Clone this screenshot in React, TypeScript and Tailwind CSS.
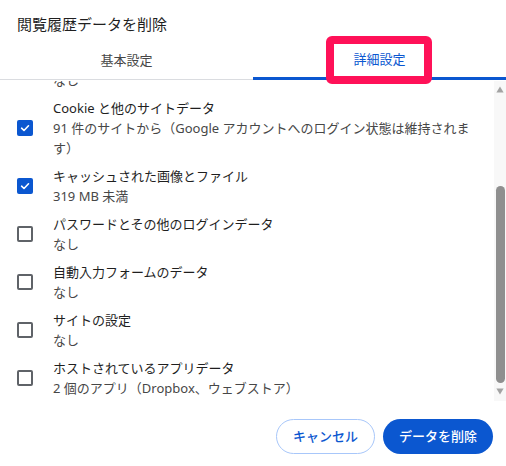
import React from "react";

const items = [
  {
    title: "Cookie と他のサイトデータ",
    sub: ["91 件のサイトから（Google アカウントへのログイン状態は維持されま", "す）"],
    checked: true,
  },
  { title: "キャッシュされた画像とファイル", sub: ["319 MB 未満"], checked: true },
  { title: "パスワードとその他のログインデータ", sub: ["なし"], checked: false },
  { title: "自動入力フォームのデータ", sub: ["なし"], checked: false },
  { title: "サイトの設定", sub: ["なし"], checked: false },
  { title: "ホストされているアプリデータ", sub: ["2 個のアプリ（Dropbox、ウェブストア）"], checked: false },
];

function Checkbox({ checked }: { checked: boolean }) {
  if (checked) {
    return (
      <div className="w-[16px] h-[16px] rounded-[2px] bg-[#0b57d0] flex items-center justify-center shrink-0">
        <svg width="12" height="12" viewBox="0 0 12 12">
          <path d="M2.6 6.2 L5 8.5 L9.5 3.8" fill="none" stroke="#ffffff" strokeWidth="1.6" strokeLinecap="round" strokeLinejoin="round" />
        </svg>
      </div>
    );
  }
  return <div className="w-[16px] h-[16px] rounded-[2px] border-2 border-[#5f6368] shrink-0" />;
}

export default function App() {
  return (
    <div
      className="relative w-[506px] h-[466px] bg-white overflow-hidden flex flex-col"
      style={{ fontFamily: '"Noto Sans", "Noto Sans CJK JP", sans-serif' }}
    >
      <div className="pt-[13px] pb-[7px] pl-[17px] text-[15px] leading-[22px] text-[#1f1f1f]">閲覧履歴データを削除</div>
      <div className="flex h-[38px]">
        <div className="flex-1 flex items-center justify-center border-b border-[#dadce0] text-[13px] text-[#474747]">基本設定</div>
        <div className="flex-1 flex items-center justify-center border-b-[3px] border-[#0b57d0] text-[13px] text-[#0b57d0]">詳細設定</div>
      </div>
      <div className="flex h-[320px] mt-[1px]">
        <div className="flex-1 overflow-hidden">
          <div className="-mt-[11px] pb-[4px] pl-[53px] text-[13px] leading-[20px] text-[#474747]">なし</div>
          {items.map((it, i) => (
            <div key={i} className="flex items-center py-[4px]">
              <div className="w-[53px] pl-[17px] flex items-center">
                <Checkbox checked={it.checked} />
              </div>
              <div className="flex flex-col">
                <div className="text-[13px] leading-[20px] text-[#1f1f1f] whitespace-nowrap">{it.title}</div>
                {it.sub.map((s, j) => (
                  <div key={j} className="text-[13px] leading-[20px] text-[#474747] whitespace-nowrap">{s}</div>
                ))}
              </div>
            </div>
          ))}
        </div>
        <div className="w-[12px] bg-[#f8f8f8] flex flex-col items-center">
          <div className="h-[15px] w-full flex items-center justify-center pt-[2px]">
            <svg width="8" height="7" viewBox="0 0 8 7">
              <path d="M4 0.5 L7.6 6.5 L0.4 6.5 Z" fill="#a3a3a3" />
            </svg>
          </div>
          <div className="flex-1 w-full flex flex-col items-center">
            <div className="mt-[90px] h-[197px] w-[9px] ml-[1px] rounded-full bg-[#8f8f8f]" />
          </div>
          <div className="h-[15px] w-full flex items-center justify-center pb-[4px]">
            <svg width="8" height="7" viewBox="0 0 8 7">
              <path d="M0.4 0.5 L7.6 0.5 L4 6.5 Z" fill="#a3a3a3" />
            </svg>
          </div>
        </div>
      </div>
      <div className="flex justify-end gap-[8px] pr-[13px] pt-[18px]">
        <button className="h-[35px] px-[16px] rounded-full border border-[#a8c7fa] text-[13px] font-medium text-[#0b57d0] bg-white">
          キャンセル
        </button>
        <button className="h-[35px] px-[16px] rounded-full bg-[#0b57d0] text-[13px] font-medium text-white">
          データを削除
        </button>
      </div>
      <div className="absolute left-[326px] top-[36px] w-[106px] h-[48px] border-[8px] border-[#ff1158] rounded-[6px]" />
    </div>
  );
}
